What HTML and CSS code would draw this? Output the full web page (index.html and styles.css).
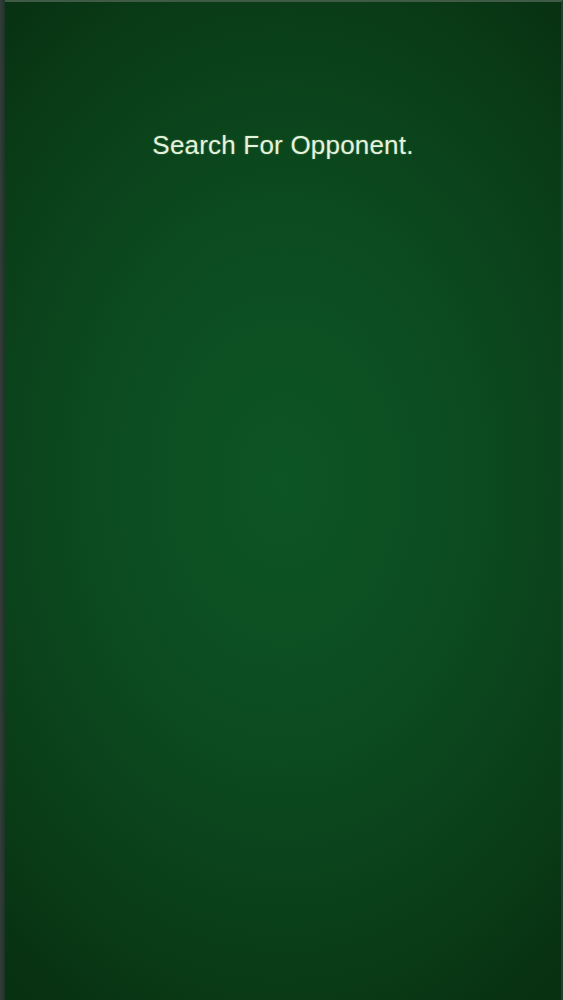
FILE: index.html
```html
<!DOCTYPE html>
<html>
<head>
<meta charset="utf-8">
<link rel="stylesheet" href="styles.css">
</head>
<body>
<div class="screen">
  <div class="edge"></div>
  <main class="board">
    <h1 class="title">Search For Opponent.</h1>
  </main>
</div>
</body>
</html>
```
FILE: styles.css
```css
html, body {
  margin: 0;
  padding: 0;
  height: 100%;
  background: #0a2c12;
}
.screen {
  display: flex;
  width: 563px;
  height: 1000px;
}
.edge {
  width: 5px;
  background: linear-gradient(to right, #333d3a, #1f3328);
}
.board {
  flex: 1;
  border-top: 2px solid #3f5a45;
  border-right: 2px solid #2a3a30;
  background: radial-gradient(ellipse 80% 62% at 50% 48%, #0d5524 0%, #0c4c20 40%, #0a3e18 75%, #083112 100%);
  display: flex;
  flex-direction: column;
  align-items: center;
}
.title {
  margin: 128px 0 0 0;
  font-family: "Liberation Sans", Arial, sans-serif;
  font-weight: normal;
  font-size: 26px;
  letter-spacing: 0.2px;
  color: #e4f3dc;
  text-shadow: 0 0 2px rgba(200, 240, 200, 0.35);
}
```
